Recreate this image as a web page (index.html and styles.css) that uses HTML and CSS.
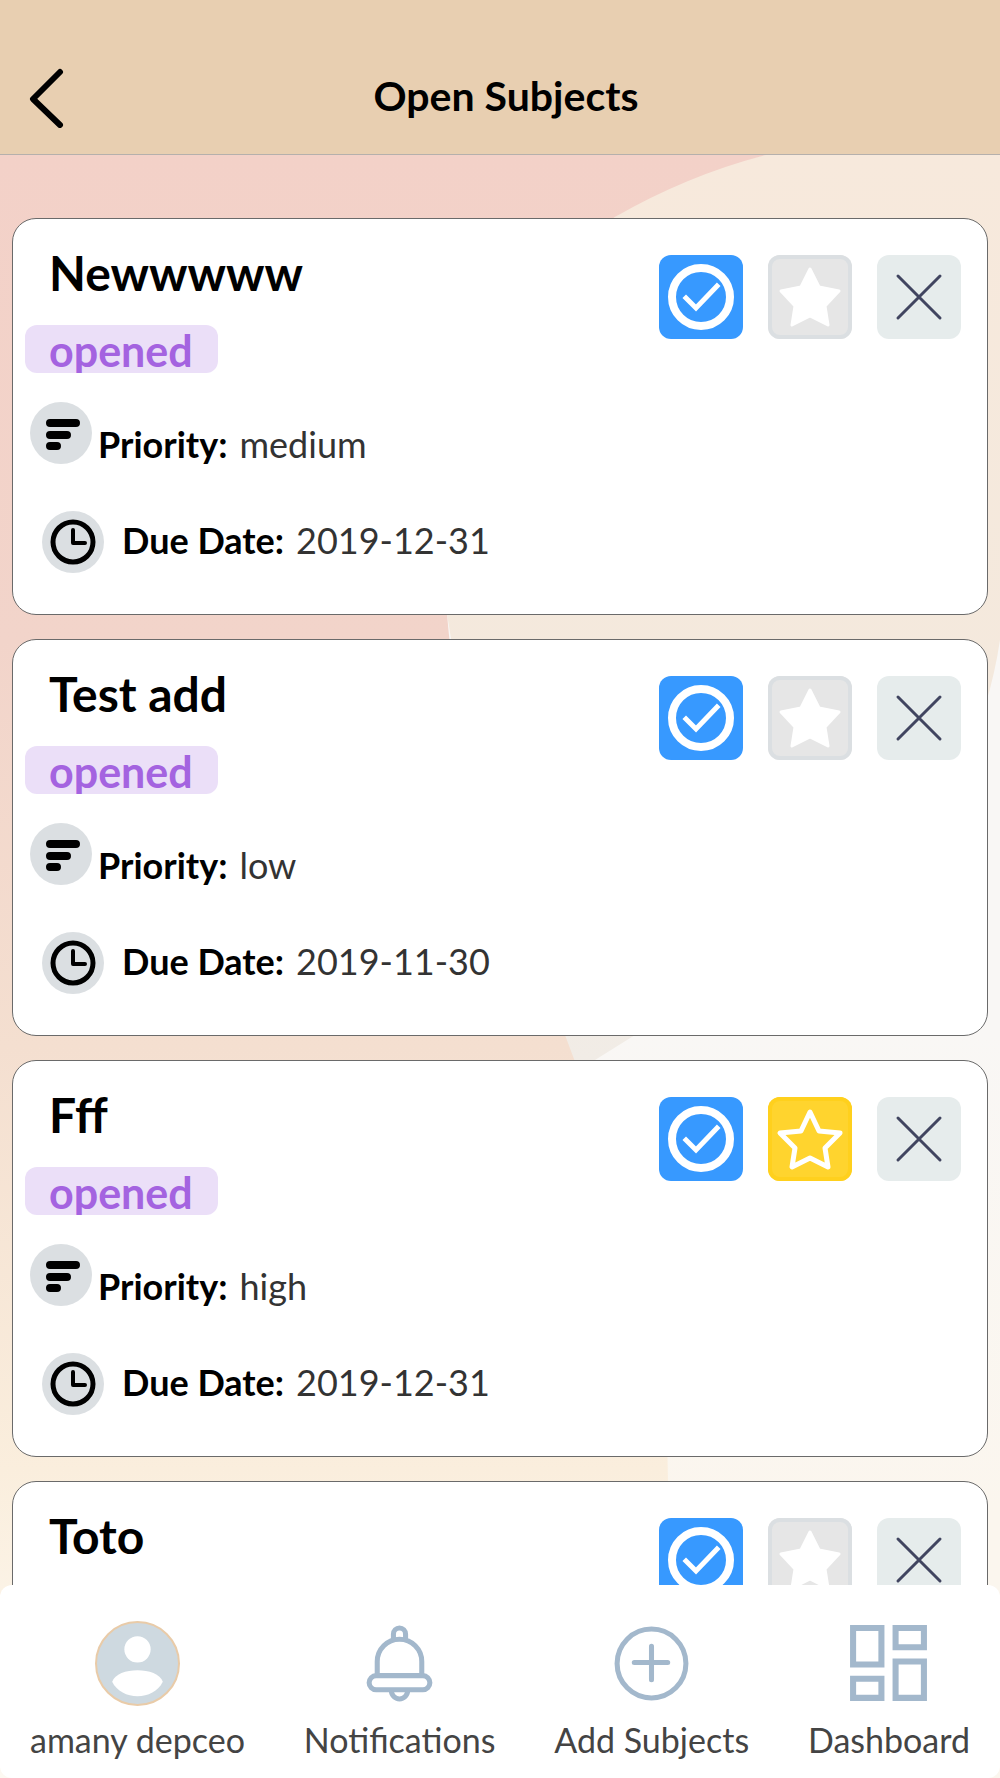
FILE: index.html
```html
<!DOCTYPE html>
<html lang="en">
<head>
<meta charset="utf-8">
<meta name="viewport" content="width=device-width, initial-scale=1">
<title>Open Subjects</title>
<link rel="stylesheet" href="styles.css">
</head>
<body>
<svg class="symbols" aria-hidden="true">
  <symbol id="check" viewBox="0 0 84 84">
    <circle cx="42" cy="42" r="29" fill="none" stroke="#fff" stroke-width="8"/>
    <path d="M27 43L37 53L58 31" fill="none" stroke="#fff" stroke-width="5" stroke-linecap="square" stroke-linejoin="miter"/>
  </symbol>
  <symbol id="star" viewBox="0 0 84 84">
    <path d="M42 15L51 34L72 36L57 51L60 70L42 61L24 70L27 51L12 36L33 34Z" stroke="#fff" stroke-width="5" stroke-linejoin="round"/>
  </symbol>
  <symbol id="star-solid" viewBox="0 0 84 84">
    <path d="M42 14L51 32L71 36L57 51L60 70L42 61L24 70L27 51L13 36L33 32Z" stroke="#fff" stroke-width="3" stroke-linejoin="round"/>
  </symbol>
  <symbol id="cross" viewBox="0 0 84 84">
    <path d="M21 21L63 63M63 21L21 63" fill="none" stroke="#414560" stroke-width="3" stroke-linecap="round"/>
  </symbol>
  <symbol id="bars" viewBox="0 0 62 62">
    <path d="M20 21H46M20 33H37M20 44H27" fill="none" stroke="#000" stroke-width="8" stroke-linecap="round"/>
  </symbol>
  <symbol id="clock" viewBox="0 0 62 62">
    <circle cx="31" cy="31" r="20" fill="none" stroke="#000" stroke-width="5"/>
    <path d="M31 19V32H43" fill="none" stroke="#000" stroke-width="4" stroke-linecap="round" stroke-linejoin="round"/>
  </symbol>
</svg>

<div class="app">
  <svg class="backdrop" viewBox="0 0 1000 1778" preserveAspectRatio="none" aria-hidden="true">
    <defs>
      <linearGradient id="blush" x1="0" y1="0" x2="0" y2="1">
        <stop offset="0" stop-color="#f3d1c8"/>
        <stop offset="0.3" stop-color="#f2d4ca"/>
        <stop offset="0.55" stop-color="#f4dfd0"/>
        <stop offset="0.81" stop-color="#faeedd"/>
        <stop offset="1" stop-color="#fdf9f2"/>
      </linearGradient>
      <linearGradient id="sand" x1="0" y1="0" x2="0" y2="1">
        <stop offset="0" stop-color="#f7e9dc"/>
        <stop offset="0.6" stop-color="#f4e9dd"/>
        <stop offset="1" stop-color="#f1ece6"/>
      </linearGradient>
      <linearGradient id="paper" x1="0" y1="0" x2="0" y2="1">
        <stop offset="0.58" stop-color="#f9f7f5"/>
        <stop offset="0.85" stop-color="#fbf6ee"/>
      </linearGradient>
    </defs>
    <path fill="url(#paper)" d="M0 0H1000V1778H0Z"/>
    <path fill="url(#sand)" d="M1000 154H770Q680 174 615 217Q430 340 447 614L520 1060H595L635 1035C820 970 970 840 1000 640Z"/>
    <path fill="url(#blush)" d="M0 154H770Q690 174 615 217Q430 340 447 614C460 780 530 930 565 1035C620 1180 668 1330 668 1481V1778H0Z"/>
  </svg>

  <header class="topbar">
    <button class="back" type="button" aria-label="Back">
      <svg viewBox="0 0 36 60"><path d="M32 4L5 31L32 57" fill="none" stroke="#000" stroke-width="6" stroke-linecap="round" stroke-linejoin="round"/></svg>
    </button>
    <h1 class="heading">Open Subjects</h1>
  </header>

  <main class="subjects">
    <article class="card">
      <div class="summary">
        <h2 class="name">Newwwww</h2>
        <span class="status">opened</span>
        <p class="field priority"><svg class="badge"><use href="#bars"/></svg><b>Priority:</b> <span>medium</span></p>
        <p class="field due"><svg class="badge"><use href="#clock"/></svg><b>Due Date:</b> <time>2019-12-31</time></p>
      </div>
      <div class="actions">
        <button class="action done" type="button" aria-label="Mark done"><svg><use href="#check"/></svg></button>
        <button class="action favorite" type="button" aria-label="Favorite"><svg><use href="#star-solid"/></svg></button>
        <button class="action remove" type="button" aria-label="Remove"><svg><use href="#cross"/></svg></button>
      </div>
    </article>

    <article class="card">
      <div class="summary">
        <h2 class="name">Test add</h2>
        <span class="status">opened</span>
        <p class="field priority"><svg class="badge"><use href="#bars"/></svg><b>Priority:</b> <span>low</span></p>
        <p class="field due"><svg class="badge"><use href="#clock"/></svg><b>Due Date:</b> <time>2019-11-30</time></p>
      </div>
      <div class="actions">
        <button class="action done" type="button" aria-label="Mark done"><svg><use href="#check"/></svg></button>
        <button class="action favorite" type="button" aria-label="Favorite"><svg><use href="#star-solid"/></svg></button>
        <button class="action remove" type="button" aria-label="Remove"><svg><use href="#cross"/></svg></button>
      </div>
    </article>

    <article class="card">
      <div class="summary">
        <h2 class="name">Fff</h2>
        <span class="status">opened</span>
        <p class="field priority"><svg class="badge"><use href="#bars"/></svg><b>Priority:</b> <span>high</span></p>
        <p class="field due"><svg class="badge"><use href="#clock"/></svg><b>Due Date:</b> <time>2019-12-31</time></p>
      </div>
      <div class="actions">
        <button class="action done" type="button" aria-label="Mark done"><svg><use href="#check"/></svg></button>
        <button class="action favorite starred" type="button" aria-label="Favorite" aria-pressed="true"><svg><use href="#star"/></svg></button>
        <button class="action remove" type="button" aria-label="Remove"><svg><use href="#cross"/></svg></button>
      </div>
    </article>

    <article class="card">
      <div class="summary">
        <h2 class="name">Toto</h2>
      </div>
      <div class="actions">
        <button class="action done" type="button" aria-label="Mark done"><svg><use href="#check"/></svg></button>
        <button class="action favorite" type="button" aria-label="Favorite"><svg><use href="#star-solid"/></svg></button>
        <button class="action remove" type="button" aria-label="Remove"><svg><use href="#cross"/></svg></button>
      </div>
    </article>
  </main>

  <nav class="tabs">
    <a class="tab" href="#profile">
      <svg viewBox="0 0 84 84"><circle cx="42" cy="42" r="41" fill="#ced9e0" stroke="#e9cba8" stroke-width="2"/><circle cx="42" cy="28" r="13" fill="#fff"/><path d="M17 60C22 45 62 45 67 60C58 79 26 79 17 60Z" fill="#fff"/></svg>
      <span>amany depceo</span>
    </a>
    <a class="tab" href="#notifications">
      <svg viewBox="0 0 84 84" fill="none" stroke="#a3b8cc" stroke-width="5"><rect x="12" y="54" width="60" height="14" rx="7"/><path d="M20 54V40A22 22 0 0 1 64 40V54M36 18V13A6 6 0 0 1 48 13V18M34 69A8 8 0 0 0 50 69"/></svg>
      <span>Notifications</span>
    </a>
    <a class="tab" href="#add">
      <svg viewBox="0 0 84 84" fill="none" stroke="#a3b8cc" stroke-width="5" stroke-linecap="round"><circle cx="42" cy="42" r="34"/><path d="M42 25V58M25 41H58"/></svg>
      <span>Add Subjects</span>
    </a>
    <a class="tab" href="#dashboard">
      <svg viewBox="0 0 84 84" fill="none" stroke="#a3b8cc" stroke-width="6"><path d="M7 7H35V43H7ZM49 7H77V26H49ZM7 57H35V76H7ZM49 40H77V76H49Z"/></svg>
      <span>Dashboard</span>
    </a>
  </nav>
</div>
</body>
</html>
```
FILE: styles.css
```css
* {
  box-sizing: border-box;
}

body {
  margin: 0;
  font-family: Lato, "Open Sans", sans-serif;
  color: #000;
}

h1,
h2,
p {
  margin: 0;
}

button {
  padding: 0;
  border: 0;
  background: none;
  cursor: pointer;
}

svg {
  display: block;
}

.symbols {
  position: absolute;
  width: 0;
  height: 0;
}

.app {
  position: relative;
  isolation: isolate;
  display: flex;
  flex-direction: column;
  height: 100vh;
  overflow: hidden;
}

.backdrop {
  position: absolute;
  inset: 0;
  z-index: -1;
  width: 100%;
  height: 100%;
}

.topbar {
  flex: none;
  display: grid;
  grid-template-columns: 64px 1fr 52px;
  align-items: start;
  padding: 64px 0 20px;
  background: #e8cfb1;
  border-bottom: 1px solid #b5b0ac;
}

.back {
  justify-self: end;
  padding: 4px 0 6px;
}

.back svg {
  width: 36px;
  height: 60px;
}

.heading {
  font-size: 41px;
  line-height: 64px;
  text-align: center;
}

.subjects {
  flex: 1;
  min-height: 0;
  display: flex;
  flex-direction: column;
  gap: 24px;
  padding: 63px 12px 24px;
  overflow-y: auto;
  scrollbar-width: none;
}

.card {
  flex: none;
  display: flex;
  justify-content: space-between;
  min-height: 397px;
  padding: 24px 26px 40px 12px;
  background: #fff;
  border: 1px solid #6a6a6a;
  border-radius: 24px;
}

.summary {
  display: flex;
  flex-direction: column;
  align-items: flex-start;
}

.name {
  padding-left: 24px;
  font-size: 48px;
  line-height: 60px;
}

.status {
  height: 48px;
  margin-top: 22px;
  padding: 0 25px 0 24px;
  overflow: hidden;
  border-radius: 12px;
  background: #ebdff8;
  color: #a463e0;
  font-size: 43px;
  font-weight: 700;
  line-height: 52px;
}

.field {
  display: flex;
  align-items: center;
  font-size: 36px;
  line-height: 48px;
  color: #333;
}

.field b {
  margin-right: 12px;
  color: #000;
}

.badge {
  width: 62px;
  height: 62px;
  border-radius: 50%;
  background: #dbdfe2;
}

.priority {
  margin-top: 29px;
  padding-left: 5px;
  align-items: flex-end;
}

.priority .badge {
  margin: 0 6px 4px 0;
}

.due {
  margin-top: 43px;
  padding-left: 17px;
  line-height: 44px;
  align-items: flex-start;
}

.due b,
.due time {
  padding-top: 7px;
}

.due .badge {
  margin-right: 18px;
}

.actions {
  display: flex;
  gap: 25px;
  padding-top: 12px;
}

.action {
  width: 84px;
  height: 84px;
  border-radius: 12px;
}

.action svg {
  width: 100%;
  height: 100%;
}

.done {
  background: #3799ff;
}

.favorite {
  background: #e6e6e6;
  box-shadow: inset 0 0 0 4px #dbdfe2;
  fill: #fff;
}

.starred {
  background: #ffd42e;
  box-shadow: inset 0 0 0 4px #ffd01d;
  fill: none;
}

.remove {
  background: #e6ecec;
}

.tabs {
  flex: none;
  display: flex;
  justify-content: space-between;
  padding: 36px 30px 16px;
  background: #fff;
  border-radius: 12px;
}

.tab {
  display: flex;
  flex-direction: column;
  align-items: center;
  gap: 12px;
  color: #444;
  font-size: 34px;
  line-height: 44px;
  text-decoration: none;
}

.tab svg {
  width: 85px;
  height: 85px;
}
```
